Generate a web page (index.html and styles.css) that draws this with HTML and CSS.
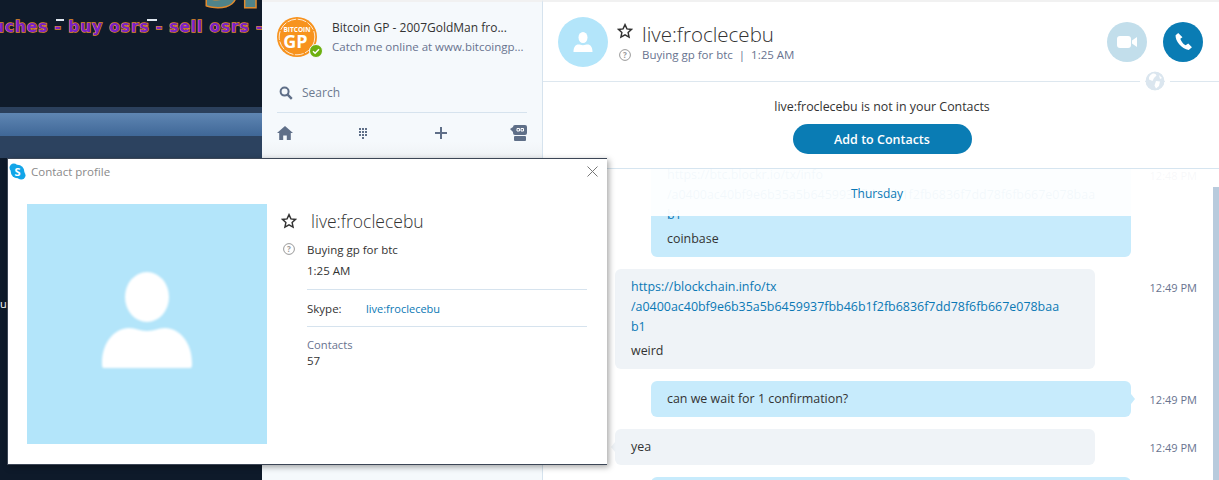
FILE: index.html
```html
<!DOCTYPE html>
<html lang="en">
<head>
<meta charset="UTF-8">
<meta name="viewport" content="width=device-width, initial-scale=1.0">
<title>Contact profile</title>
<link rel="stylesheet" href="styles.css">
</head>
<body>

<div class="screen">
  <div class="desktop">
    <div class="site-top">
      <div class="site-logo">itcoingp</div>
      <div class="site-tagline">uches - buy osrs - sell osrs -</div>
    </div>
    <div class="site-edge"></div>
    <div class="site-nav"></div>
    <div class="site-subnav"></div>
    <div class="site-stray">u</div>
  </div>

  <div class="sidebar">
    <div class="me">
      <div class="me-avatar">
        <svg width="40" height="40" viewBox="0 0 40 40">
          <circle cx="20" cy="20" r="20" fill="#f7931e"/>
          <circle cx="20" cy="20" r="17.8" fill="none" stroke="#fff" stroke-width="0.8" stroke-dasharray="9 1.5"/>
          <text x="20" y="14.500" class="logo-small" text-anchor="middle">BITCOIN</text>
          <text x="18.500" y="31" class="logo-big" text-anchor="middle">GP</text>
        </svg>
        <svg class="me-badge" width="14" height="14" viewBox="0 0 14 14">
          <circle cx="7" cy="7" r="6.5" fill="#6cb00f" stroke="#f5f9fc"/>
          <path d="M4 7.2l2.1 2L10 5.2" fill="none" stroke="#fff" stroke-width="1.5"/>
        </svg>
      </div>
      <div class="me-text">
        <div class="me-name">Bitcoin GP - 2007GoldMan fro...</div>
        <div class="me-status">Catch me online at www.bitcoingp...</div>
      </div>
    </div>
    <div class="search">
      <svg width="14" height="14" viewBox="0 0 14 14">
        <circle cx="5.6" cy="5.6" r="4" fill="none" stroke="#5f6f88" stroke-width="2"/>
        <path d="M8.6 8.6l4.2 4.2" stroke="#5f6f88" stroke-width="2.4"/>
      </svg>
      <span>Search</span>
    </div>
    <div class="tools">
      <svg width="16" height="14" viewBox="0 0 16 14"><path d="M8 0L0 7h2.2v7h4V9.500h3.600V14h4V7H16z" fill="#5f6f88"/></svg>
      <svg width="10" height="12" viewBox="0 0 10 12" fill="#5f6f88">
        <path d="M1 1h2v2H1zM4 1h2v2H4zM7 1h2v2H7zM1 4h2v2H1zM4 4h2v2H4zM7 4h2v2H7zM1 7h2v2H1zM4 7h2v2H4zM7 7h2v2H7zM4 10h2v2H4z"/>
      </svg>
      <svg width="12" height="12" viewBox="0 0 12 12"><path d="M5 0h2v5h5v2H7v5H5V7H0V5h5z" fill="#5f6f88"/></svg>
      <svg width="18" height="16" viewBox="0 0 18 16">
        <rect x="3" y="0" width="14" height="10" rx="2" fill="#5f6f88"/>
        <path d="M0 4l3-2v5z" fill="#5f6f88"/>
        <rect x="4" y="11" width="12" height="5" rx="1" fill="#5f6f88"/>
        <path d="M7 3.500h2.500v2.500H7zM11 3.500h2.500v2.500H11z" fill="none" stroke="#fff"/>
      </svg>
    </div>
  </div>

  <div class="chat">
    <div class="chat-head">
      <div class="round-avatar">
        <svg width="20" height="20" viewBox="0 0 20 20" fill="#fff">
          <ellipse cx="10" cy="5.500" rx="4.500" ry="5.500"/>
          <path d="M0.500 20c0-5 2-7.500 5-7.500 1.500 0 2.500 .7 4.500 .7s3-.7 4.500-.7c3 0 5 2.500 5 7.500z"/>
        </svg>
      </div>
      <svg class="star" width="16" height="16" viewBox="0 0 24 24"><path d="M12 2.500l2.900 6.300 6.900.8-5.100 4.700 1.400 6.800-6.100-3.400-6.100 3.400 1.400-6.800-5.100-4.700 6.900-.8z" fill="none" stroke="#333" stroke-width="2.200"/></svg>
      <div class="head-text">
        <div class="head-name">live:froclecebu</div>
        <div class="head-status">Buying gp for btc &nbsp;|&nbsp; 1:25 AM</div>
      </div>
      <svg class="unknown" width="12" height="12" viewBox="0 0 12 12"><circle cx="6" cy="6" r="5.400" fill="none" stroke="#999"/><text x="6" y="8.500" text-anchor="middle" class="unknown-mark">?</text></svg>
      <div class="call-button video">
        <svg width="20" height="12" viewBox="0 0 20 12"><rect x="0" y="0" width="14" height="12" rx="3" fill="#fff"/><path d="M15 4.500L20 1v10l-5-3.500z" fill="#fff"/></svg>
      </div>
      <div class="call-button phone">
        <svg width="19" height="19" viewBox="0 0 18 18"><path d="M4 1L1.500 3C1 8 7 16 14 17l3-2.500L13.500 11 11 12.500C9 12 6.500 8.500 6 6.500L8 5z" fill="#fff"/></svg>
      </div>
      <svg class="globe" width="20" height="20" viewBox="0 0 20 20">
        <circle cx="10" cy="10" r="9.500" fill="#dbe6ef"/>
        <path d="M7 3c2-1 4 0 4.500 1.500L9 7 7.500 10 4 8.500C3.500 6 5 4 7 3zM11 10l4 .5-1 4.500-3 2.500-1.500-3zM14 4l3 3-2 1z" fill="#fff"/>
      </svg>
    </div>

    <div class="not-contact">
      <div class="not-contact-text">live:froclecebu is not in your Contacts</div>
      <div class="add-button">Add to Contacts</div>
    </div>

    <div class="messages">
      <div class="message mine">
        <div class="bubble">
          <div class="link">https://btc.blockr.io/tx/info<br>/a0400ac40bf9e6b35a5b6459937fbb46b1f2fb6836f7dd78f6fb667e078baa<br>b1</div>
          <div class="plain">coinbase</div>
        </div>
        <div class="time">12:48 PM</div>
      </div>
      <div class="message theirs">
        <div class="bubble">
          <div class="link">https://blockchain.info/tx<br>/a0400ac40bf9e6b35a5b6459937fbb46b1f2fb6836f7dd78f6fb667e078baa<br>b1</div>
          <div class="plain">weird</div>
        </div>
        <div class="time">12:49 PM</div>
      </div>
      <div class="message mine tail">
        <div class="bubble"><div>can we wait for 1 confirmation?</div></div>
        <div class="time">12:49 PM</div>
      </div>
      <div class="message theirs tail">
        <div class="bubble"><div>yea</div></div>
        <div class="time">12:49 PM</div>
      </div>
      <div class="message mine">
        <div class="bubble"><div>&nbsp;</div></div>
      </div>
      <div class="day-label"><span>Thursday</span></div>
      <div class="scroll-thumb"></div>
    </div>
  </div>

  <div class="profile">
    <div class="profile-title">
      <svg width="17" height="17" viewBox="0 0 17 17">
        <circle cx="8.500" cy="8.500" r="6.800" fill="#12a5e8"/>
        <circle cx="4.800" cy="4.800" r="4.300" fill="#12a5e8"/>
        <circle cx="12.200" cy="12.200" r="4.300" fill="#12a5e8"/>
        <text x="8.500" y="12.500" text-anchor="middle" class="skype-s">S</text>
      </svg>
      <span>Contact profile</span>
      <svg class="close" width="11" height="11" viewBox="0 0 11 11"><path d="M.5.5l10 10M10.500.5l-10 10" stroke="#777" fill="none"/></svg>
    </div>
    <div class="profile-body">
      <div class="profile-photo">
        <svg class="photo-person" width="92" height="100" viewBox="0 0 92 100" fill="#fff">
          <ellipse cx="46" cy="28" rx="22" ry="25"/>
          <path d="M3 99c-2 0-2-2-2-5 0-21 13-35 27-35 7 0 10 3 18 3s11-3 18-3c14 0 27 14 27 35 0 3 0 5-2 5z"/>
        </svg>
      </div>
      <div class="profile-info">
        <div class="info-head">
          <svg width="16" height="16" viewBox="0 0 24 24"><path d="M12 2.500l2.900 6.300 6.900.8-5.100 4.700 1.400 6.800-6.100-3.400-6.100 3.400 1.400-6.800-5.100-4.700 6.900-.8z" fill="none" stroke="#333" stroke-width="2.200"/></svg>
          <span>live:froclecebu</span>
        </div>
        <div class="info-status">
          <svg width="12" height="12" viewBox="0 0 12 12"><circle cx="6" cy="6" r="5.400" fill="none" stroke="#999"/><text x="6" y="8.500" text-anchor="middle" class="unknown-mark">?</text></svg>
          <span>Buying gp for btc</span>
        </div>
        <div class="info-block">
          <div class="info-time">1:25 AM</div>
          <div class="info-row"><span class="info-label">Skype:</span><span class="info-link">live:froclecebu</span></div>
          <div class="info-contacts">
            <div class="contacts-label">Contacts</div>
            <div>57</div>
          </div>
        </div>
      </div>
    </div>
  </div>
</div>

</body>
</html>
```

FILE: styles.css
```css
* {
  box-sizing: border-box;
}

body {
  margin: 0;
  font-family: "Open Sans", "Noto Sans", sans-serif;
  font-size: 11.5px;
  color: #333;
  background-color: #0e1a2a;
}

.screen {
  position: relative;
  display: flex;
  width: 1219px;
  height: 480px;
  overflow: hidden;
}

/* website behind the skype window */
.desktop {
  width: 262px;
  flex-shrink: 0;
  overflow: hidden;
}

.site-top {
  height: 107px;
  background-color: #0f1b2a;
  background-image: linear-gradient(#dfe6ee, #dfe6ee), linear-gradient(#dfe6ee, #dfe6ee);
  background-size: 8px 2px, 10px 2px;
  background-position: 56px 19px, 147px 19px;
  background-repeat: no-repeat;
  overflow: hidden;
}

.site-logo {
  margin-top: -56px;
  height: 73px;
  padding-left: 24px;
  font-family: "DejaVu Sans", sans-serif;
  font-weight: bold;
  font-size: 56px;
  line-height: 64px;
  white-space: nowrap;
  color: #4f8389;
  -webkit-text-stroke: 3px #e08a2e;
  paint-order: stroke fill;
}

.site-tagline {
  margin-left: -7px;
  font-family: "DejaVu Sans", sans-serif;
  font-weight: bold;
  font-size: 15.5px;
  letter-spacing: 0.87px;
  line-height: 20px;
  white-space: nowrap;
  color: #7a22c8;
  -webkit-text-stroke: 1.4px #e08a2e;
  paint-order: stroke fill;
}

.site-edge {
  height: 6px;
  background-color: #2b405c;
}

.site-nav {
  height: 23px;
  background: linear-gradient(#5f86b3, #3f6797);
}

.site-subnav {
  height: 22px;
  background-color: #2c425f;
}

.site-stray {
  margin-top: 139px;
  color: #fff;
  font-size: 11px;
  line-height: 14px;
}

/* left column */
.sidebar {
  width: 281px;
  flex-shrink: 0;
  height: 480px;
  padding: 15px 15px 0;
  border-top: 2px solid #f1f1f1;
  border-right: 1px solid #d6e3ee;
  background: linear-gradient(#f5f9fc 140px, #eef1f4 158px, #f5f9fc 158px);
}

.me {
  display: flex;
  align-items: center;
  gap: 15px;
}

.me-avatar {
  position: relative;
  width: 40px;
  height: 40px;
}

.me-badge {
  position: absolute;
  right: -6px;
  bottom: -1px;
}

.logo-small {
  font-family: "Open Sans", sans-serif;
  font-weight: bold;
  font-size: 6.5px;
  fill: #fff;
}

.logo-big {
  font-family: "Open Sans", sans-serif;
  font-weight: bold;
  font-size: 18px;
  fill: #fff;
}

.me-text {
  line-height: 19px;
  white-space: nowrap;
}

.me-name {
  font-size: 12px;
}

.me-status {
  color: #68738f;
}

.search {
  display: flex;
  align-items: center;
  gap: 9px;
  width: 250px;
  height: 36px;
  margin-top: 20px;
  padding: 0 2px 4px;
  border-bottom: 1px solid #d6e3ee;
  color: #6d7a90;
  font-size: 12px;
}

.tools {
  display: grid;
  grid-template-columns: repeat(4, 78px);
  justify-items: center;
  align-items: center;
  height: 40px;
  margin-left: -31px;
}

/* conversation */
.chat {
  position: relative;
  flex: 1;
  min-width: 0;
  border-top: 2px solid #f1f1f1;
  background-color: #fff;
}

.chat-head {
  position: relative;
  display: flex;
  align-items: center;
  height: 80px;
  padding: 0 16px 0 15px;
  border-bottom: 1px solid #dde7ef;
}

.round-avatar {
  display: flex;
  align-items: center;
  justify-content: center;
  width: 50px;
  height: 50px;
  border-radius: 50%;
  background-color: #b3e5fa;
}

.star {
  margin-left: 9px;
  margin-top: -22px;
  flex-shrink: 0;
}

.head-text {
  margin-left: 9px;
  flex: 1;
}

.head-name {
  font-size: 20.5px;
  font-weight: 300;
  line-height: 26px;
}

.head-status {
  color: #68738f;
  font-size: 11.5px;
}

.unknown {
  position: absolute;
  left: 76px;
  top: 47px;
}

.unknown-mark {
  font-size: 8px;
  font-weight: bold;
  fill: #999;
}

.call-button {
  display: flex;
  align-items: center;
  justify-content: center;
  width: 40px;
  height: 40px;
  margin-left: 16px;
  border-radius: 50%;
}

.video {
  background-color: #c2deeb;
}

.phone {
  background-color: #0a7cb4;
}

.globe {
  position: absolute;
  right: 54px;
  bottom: -10px;
  outline: 5px solid #fff;
  border-radius: 50%;
}

.not-contact {
  display: flex;
  flex-direction: column;
  align-items: center;
  height: 87px;
  padding-top: 16px;
  padding-left: 2px;
  border-bottom: 1px solid #d6e5f0;
}

.not-contact-text {
  font-size: 12.4px;
  line-height: 18px;
  margin-bottom: 8px;
}

.add-button {
  width: 179px;
  height: 30px;
  padding-top: 1px;
  border-radius: 15px;
  background-color: #0a7cb4;
  color: #fff;
  font-weight: 600;
  font-size: 12.5px;
  line-height: 30px;
  text-align: center;
}

.messages {
  position: relative;
  height: 311px;
  overflow: hidden;
}

.message {
  display: flex;
  align-items: flex-start;
  margin-bottom: 12px;
  padding-left: 72px;
  padding-right: 22px;
}

.message:first-child {
  margin-top: -12px;
}

.message.mine {
  padding-left: 108px;
}

.bubble {
  position: relative;
  width: 480px;
  padding: 8px 16px;
  border-radius: 6px;
  font-size: 12.45px;
  line-height: 20px;
}

.mine .bubble {
  background-color: #c7ebfc;
}

.theirs .bubble {
  background-color: #eff3f7;
}

.tail.mine .bubble::after {
  content: "";
  position: absolute;
  right: -4px;
  top: 13px;
  border-top: 5px solid transparent;
  border-bottom: 5px solid transparent;
  border-left: 4px solid #c7ebfc;
}

.tail.theirs .bubble::after {
  content: "";
  position: absolute;
  left: -4px;
  top: 13px;
  border-top: 5px solid transparent;
  border-bottom: 5px solid transparent;
  border-right: 4px solid #eff3f7;
}

.link {
  color: #0a78b5;
}

.plain {
  margin-top: 4px;
}

.time {
  margin-left: auto;
  margin-top: 11px;
  color: #68738f;
  font-size: 11px;
  line-height: 16px;
  white-space: nowrap;
}

.day-label {
  position: absolute;
  left: 0;
  right: 0;
  top: 0;
  height: 47px;
  padding-top: 16px;
  padding-right: 8px;
  background-color: rgba(255, 255, 255, 0.95);
  color: #0a78b5;
  font-size: 12px;
  line-height: 18px;
  text-align: center;
}

.scroll-thumb {
  position: absolute;
  right: 0;
  top: 18px;
  width: 6px;
  height: 300px;
  background-color: #b8cbdd;
}

/* floating window */
.profile {
  position: absolute;
  left: 7px;
  top: 158px;
  width: 600px;
  height: 307px;
  border: 1px solid #3c4656;
  border-width: 1px 0 1px 1px;
  background-color: #fff;
  box-shadow: 2px 2px 6px rgba(0, 0, 0, 0.35);
}

.profile-title {
  display: flex;
  align-items: center;
  gap: 5px;
  height: 24px;
  padding: 0 9px 0 1px;
  color: #8a8a8a;
  font-size: 11.5px;
}

.profile-title .close {
  margin-left: auto;
}

.skype-s {
  font-family: "Open Sans", sans-serif;
  font-weight: bold;
  font-size: 11px;
  fill: #fff;
}

.profile-body {
  display: flex;
  gap: 14px;
  padding: 21px 20px 0 19px;
}

.profile-photo {
  display: flex;
  align-items: flex-end;
  justify-content: center;
  width: 240px;
  height: 240px;
  padding-bottom: 75px;
  background-color: #b3e5fa;
}

.photo-person {
  filter: blur(1px);
}

.profile-info {
  flex: 1;
  min-width: 0;
}

.info-head {
  display: flex;
  align-items: center;
  gap: 14px;
  height: 33px;
  font-size: 17.5px;
  font-weight: 300;
}

.info-status {
  display: flex;
  align-items: center;
  gap: 12px;
  height: 20px;
  margin-top: 2px;
  padding-left: 2px;
}

.info-block {
  margin-left: 26px;
}

.info-time {
  padding: 2px 0 8px;
  line-height: 20px;
  border-bottom: 1px solid #d6e3ee;
}

.info-row {
  display: flex;
  height: 37px;
  align-items: center;
  border-bottom: 1px solid #d6e3ee;
}

.info-label {
  width: 59px;
}

.info-link {
  color: #0a78b5;
  font-size: 11px;
}

.info-contacts {
  padding-top: 10px;
  line-height: 16px;
}

.contacts-label {
  color: #68738f;
  font-size: 11.2px;
}
```
